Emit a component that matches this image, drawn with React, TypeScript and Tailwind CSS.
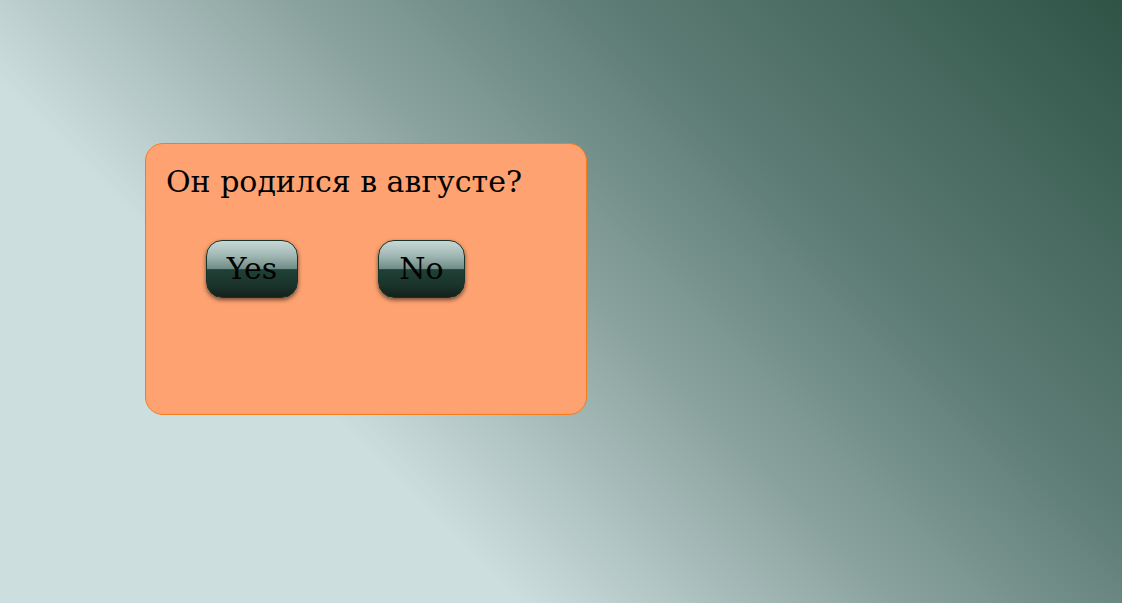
import React from 'react';

function GlossButton({ label, width }: { label: string; width: string }) {
  return (
    <button className={`${width} h-[58px] rounded-[16px] border border-[#163328] bg-[linear-gradient(to_bottom,#c6d8d7_0%,#a3b9b6_25%,#6f8b86_50%,#1f4137_51%,#1b342b_78%,#13201b_100%)] text-[30px] leading-none text-black shadow-[0_2px_4px_rgba(0,0,0,0.55)] font-['DejaVu_Serif',serif]`}>
      {label}
    </button>
  );
}

export default function App() {
  return (
    <div className="min-h-[603px] w-full bg-[linear-gradient(45deg,#cddede_30%,#8aa29e_52%,#5d7c75_70%,#2f5446_100%)] pl-[145px] pt-[143px] font-['DejaVu_Serif',serif]">
      {/* Question card */}
      <div className="h-[272px] w-[442px] rounded-[18px] border border-[#f77a1c] bg-[#fea271] px-[20px] pt-[20px]">
        <h2 className="text-[30px] leading-[36px] text-black">Он родился в августе?</h2>
        <div className="mt-[40px] flex gap-[80px] pl-[40px]">
          <GlossButton label="Yes" width="w-[92px]" />
          <GlossButton label="No" width="w-[87px]" />
        </div>
      </div>
    </div>
  );
}
